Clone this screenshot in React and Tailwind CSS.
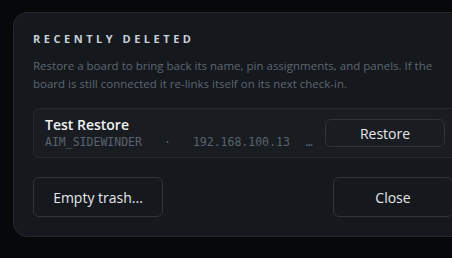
import React from "react";

const sans = { fontFamily: "'Open Sans', 'Noto Sans', sans-serif" };

const App = () => {
  return (
    <div
      className="w-[452px] h-[258px] overflow-hidden bg-[#070809] pt-[12px] pl-[13px]"
      style={sans}
    >
      <div className="w-[464px] h-[225px] rounded-[14px] border border-[#24282e] bg-[#15181c] px-[19px] pt-[18px]">
        <h2 className="text-[11px] font-bold tracking-[0.32em] text-[#c8d0da] leading-[16px]">
          RECENTLY DELETED
        </h2>
        <p className="mt-[10px] text-[11.5px] leading-[18px] text-[#5d6772] w-[420px]">
          Restore a board to bring back its name, pin assignments, and panels. If the
          board is still connected it re-links itself on its next check-in.
        </p>

        <div className="mt-[15px] flex items-center h-[50px] rounded-[6px] border border-[#262a30] bg-[#191c20] pl-[11px] pr-[11px]">
          <div className="flex flex-col flex-1 min-w-0">
            <span className="text-[14px] font-semibold text-[#eef1f4] leading-[18px]">
              Test Restore
            </span>
            <div
              className="flex items-center text-[11.5px] text-[#5a636e] leading-[16px] whitespace-pre"
              style={{ fontFamily: "'DejaVu Sans Mono', 'Liberation Mono', monospace" }}
            >
              <span>AIM_SIDEWINDER</span>
              <span className="mx-[22px]">·</span>
              <span>192.168.100.13</span>
              <span className="ml-[16px]">…</span>
            </div>
          </div>
          <button className="w-[120px] h-[28px] rounded-[6px] border border-[#30353c] text-[14px] font-medium text-[#e4e8ec] bg-transparent">
            Restore
          </button>
        </div>

        <div className="mt-[19px] flex items-center justify-between pr-[4px]">
          <button className="w-[130px] h-[40px] rounded-[6px] border border-[#30353c] text-[14px] font-medium text-[#e4e8ec] bg-transparent">
            Empty trash...
          </button>
          <button className="w-[120px] h-[40px] rounded-[6px] border border-[#30353c] text-[14px] font-medium text-[#e4e8ec] bg-transparent">
            Close
          </button>
        </div>
      </div>
    </div>
  );
};

export default App;
